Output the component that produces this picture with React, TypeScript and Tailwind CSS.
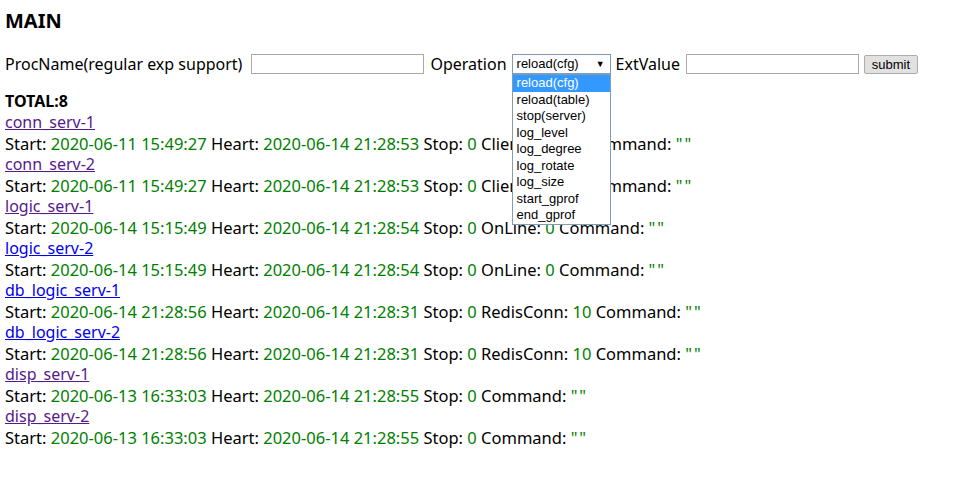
import React from "react";

type Row = { name: string; visited: boolean; start: string; heart: string; extra?: [string, string] };

const rows: Row[] = [
  { name: "conn_serv-1", visited: true, start: "2020-06-11 15:49:27", heart: "2020-06-14 21:28:53", extra: ["ClientNum", "0"] },
  { name: "conn_serv-2", visited: true, start: "2020-06-11 15:49:27", heart: "2020-06-14 21:28:53", extra: ["ClientNum", "0"] },
  { name: "logic_serv-1", visited: true, start: "2020-06-14 15:15:49", heart: "2020-06-14 21:28:54", extra: ["OnLine", "0"] },
  { name: "logic_serv-2", visited: false, start: "2020-06-14 15:15:49", heart: "2020-06-14 21:28:54", extra: ["OnLine", "0"] },
  { name: "db_logic_serv-1", visited: false, start: "2020-06-14 21:28:56", heart: "2020-06-14 21:28:31", extra: ["RedisConn", "10"] },
  { name: "db_logic_serv-2", visited: false, start: "2020-06-14 21:28:56", heart: "2020-06-14 21:28:31", extra: ["RedisConn", "10"] },
  { name: "disp_serv-1", visited: true, start: "2020-06-13 16:33:03", heart: "2020-06-14 21:28:55" },
  { name: "disp_serv-2", visited: true, start: "2020-06-13 16:33:03", heart: "2020-06-14 21:28:55" },
];

const options = ["reload(cfg)", "reload(table)", "stop(server)", "log_level", "log_degree", "log_rotate", "log_size", "start_gprof", "end_gprof"];

const G = ({ children }: { children: React.ReactNode }) => <span className="text-[#008000]">{children}</span>;

export default function App() {
  return (
    <div className="min-h-[484px] bg-white px-[5px] font-['Noto_Sans',sans-serif] text-[16px] leading-[21px] text-black">
      <div className="pt-[9px] text-[20px] font-bold leading-[24px]">MAIN</div>
      <div className="mt-[19px] flex h-[24px] items-center">
        <span>ProcName(regular exp support)</span>
        <div className="ml-[9px] h-[20px] w-[173px] border border-[#a9a9a9] bg-white" />
        <span className="ml-[6px]">Operation</span>
        <div className="relative ml-[5px]">
          <div className="flex h-[20px] w-[99px] items-center justify-between border border-[#7f9db9] bg-white pl-[4px] pr-[5px] font-['Liberation_Sans',sans-serif] text-[13px] leading-[16px]">
            <span>reload(cfg)</span>
            <span className="text-[9px]">▼</span>
          </div>
          <div className="absolute left-0 top-[20px] z-10 w-[99px] border border-[#7f9db9] bg-white font-['Liberation_Sans',sans-serif] text-[13px] leading-[16.5px]">
            {options.map((o, i) => (
              <div key={o} className={i === 0 ? "bg-[#3399ff] pl-[4px] text-white" : "pl-[4px]"}>{o}</div>
            ))}
          </div>
        </div>
        <span className="ml-[5px]">ExtValue</span>
        <div className="ml-[6px] h-[20px] w-[173px] border border-[#a9a9a9] bg-white" />
        <div className="ml-[5px] flex h-[19px] w-[54px] items-center justify-center rounded-[2px] border border-[#adadad] bg-[#e1e1e1] font-['Liberation_Sans',sans-serif] text-[13px]">submit</div>
      </div>
      <div className="mt-[15px] font-bold">TOTAL:8</div>
      {rows.map((r) => (
        <div key={r.name}>
          <div>
            <a href="#" className={r.visited ? "text-[#551a8b] underline" : "text-[#0000ee] underline"}>{r.name}</a>
          </div>
          <div className="whitespace-nowrap text-[16.5px]">
            Start: <G>{r.start}</G> Heart: <G>{r.heart}</G> Stop: <G>0</G>
            {r.extra ? (
              <>
                {" "}{r.extra[0]}: <G>{r.extra[1]}</G>
              </>
            ) : null}{" "}
            Command: <span className="tracking-[2px] text-[#008000]">""</span>
          </div>
        </div>
      ))}
    </div>
  );
}
